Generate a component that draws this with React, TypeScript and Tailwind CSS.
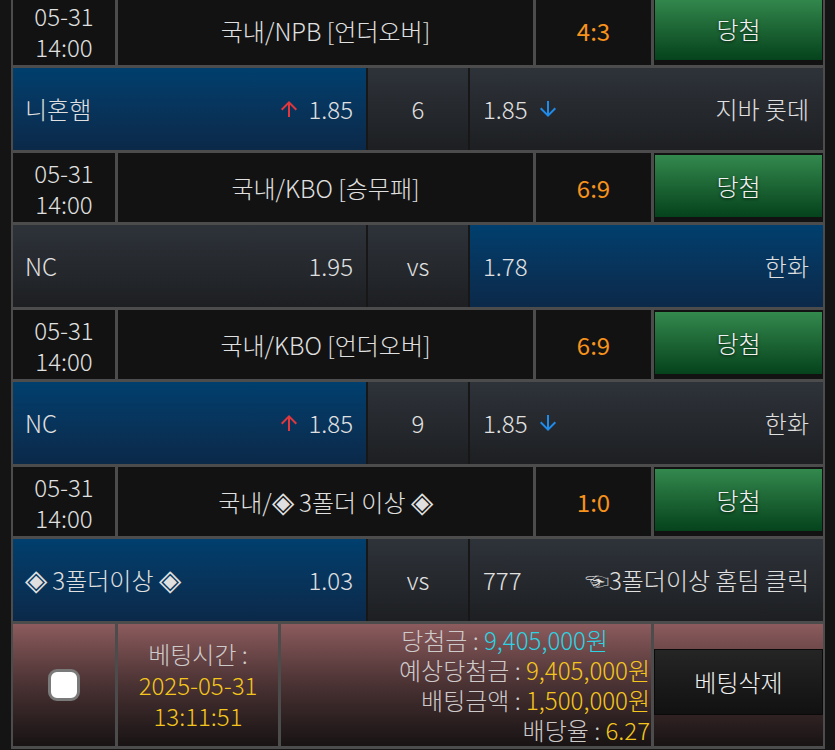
import type { ReactNode } from "react";

type Game = {
  league: ReactNode;
  score: string;
  home: ReactNode;
  homeOdds: string;
  mid: string;
  awayOdds: string;
  away: string;
  pick: "home" | "away";
  arrows?: boolean;
};

// the diamond glyph is drawn a bit larger than the text around it
function Dia() {
  return <span className="inline-block text-[29px] leading-none">◈</span>;
}

const games: Game[] = [
  {
    league: "국내/NPB [언더오버]",
    score: "4:3",
    home: "니혼햄",
    homeOdds: "1.85",
    mid: "6",
    awayOdds: "1.85",
    away: "지바 롯데",
    pick: "home",
    arrows: true,
  },
  {
    league: "국내/KBO [승무패]",
    score: "6:9",
    home: "NC",
    homeOdds: "1.95",
    mid: "vs",
    awayOdds: "1.78",
    away: "한화",
    pick: "away",
  },
  {
    league: "국내/KBO [언더오버]",
    score: "6:9",
    home: "NC",
    homeOdds: "1.85",
    mid: "9",
    awayOdds: "1.85",
    away: "한화",
    pick: "home",
    arrows: true,
  },
  {
    league: (
      <>
        국내/<Dia /> 3폴더 이상 <Dia />
      </>
    ),
    score: "1:0",
    home: (
      <>
        <Dia /> 3폴더이상 <Dia />
      </>
    ),
    homeOdds: "1.03",
    mid: "vs",
    awayOdds: "777",
    away: "☜3폴더이상 홈팀 클릭",
    pick: "home",
  },
];

// material style arrows
function UpArrow() {
  return (
    <svg viewBox="0 0 24 24" className="w-6 h-6 fill-[#e2373c]">
      <path d="M4 12l1.41 1.41L11 7.83V20h2V7.83l5.58 5.59L20 12l-8-8-8 8z" />
    </svg>
  );
}

function DownArrow() {
  return (
    <svg viewBox="0 0 24 24" className="w-6 h-6 fill-[#1f8bea]">
      <path d="M20 12l-1.41-1.41L13 16.17V4h-2v12.17l-5.58-5.59L4 12l8 8 8-8z" />
    </svg>
  );
}

const selected = "bg-linear-to-b from-[#003f6e] to-[#0b2949]";
const plain = "bg-linear-to-b from-[#2e333a] to-[#1d1f22]";

function InfoRow({ game }: { game: Game }) {
  return (
    <div className="flex h-[69px] gap-[3px]">
      <div className="w-[102px] flex flex-col items-center justify-center bg-[#121212] leading-[31px]">
        <span>05-31</span>
        <span>14:00</span>
      </div>
      <div className="w-[415px] flex items-center justify-center bg-[#121212]">
        <span>{game.league}</span>
      </div>
      <div className="w-[115px] flex items-center justify-center bg-[#121212] font-normal text-[#f7921c]">
        {game.score}
      </div>
      <div className="flex-1 bg-[#121212] pt-[2px] pb-[5px] pl-[1px] pr-[1px]">
        <div className="h-full flex items-center justify-center bg-linear-to-b from-[#33894e] to-[#05431c] text-[#f2f2f2] [text-shadow:0_1px_3px_rgba(0,0,0,0.7)]">
          당첨
        </div>
      </div>
    </div>
  );
}

function OddsRow({ game }: { game: Game }) {
  return (
    <div className="flex h-[82px] gap-[2px] bg-[#171717]">
      <div
        className={`w-[353px] flex items-center justify-between pl-3 pr-[13px] ${
          game.pick === "home" ? selected : plain
        }`}
      >
        <span>{game.home}</span>
        <span className="flex items-center gap-[7px]">
          {game.arrows && <UpArrow />}
          {game.homeOdds}
        </span>
      </div>
      <div className={`w-[100px] flex items-center justify-center ${plain}`}>
        {game.mid}
      </div>
      <div
        className={`flex-1 flex items-center justify-between pl-[13px] pr-[14px] ${
          game.pick === "away" ? selected : plain
        }`}
      >
        <span className="flex items-center gap-2">
          {game.awayOdds}
          {game.arrows && <DownArrow />}
        </span>
        <span>{game.away}</span>
      </div>
    </div>
  );
}

const betBg = "bg-linear-to-b from-[#8c5b5d] via-[#4a3233] to-[#181314]";

function BetLine({ label, value, color, extra }: { label: string; value: string; color: string; extra?: string }) {
  return (
    <div className={`h-[30px] flex items-center text-[#cfcaca] ${extra ?? ""}`}>
      {label}&nbsp;:&nbsp;<span className={color}>{value}</span>
    </div>
  );
}

function BetRow() {
  return (
    <div className="flex h-[122px] gap-[3px]">
      <div className={`w-[102px] flex items-center justify-center ${betBg}`}>
        <div className="w-8 h-8 rounded-[9px] bg-white border-[3px] border-[#7a7a7a]" />
      </div>
      <div className={`w-[160px] flex flex-col items-center justify-center ${betBg}`}>
        <div className="h-[31px] flex items-center text-[#cfcaca]">베팅시간 :</div>
        <div className="h-[31px] flex items-center text-[#f4c61d]">2025-05-31</div>
        <div className="h-[31px] flex items-center text-[#f4c61d]">13:11:51</div>
      </div>
      <div className={`w-[370px] flex flex-col items-end justify-center pr-[1px] ${betBg}`}>
        <BetLine label="당첨금" value="9,405,000원" color="text-[#2bd3e3]" extra="mr-[42px]" />
        <BetLine label="예상당첨금" value="9,405,000원" color="text-[#f4c61d]" />
        <BetLine label="배팅금액" value="1,500,000원" color="text-[#f4c61d]" />
        <BetLine label="배당율" value="6.27" color="text-[#f4c61d]" />
      </div>
      <div className={`flex-1 pt-[25px] ${betBg}`}>
        <div className="h-[66px] flex items-center justify-center bg-linear-to-b from-[#252525] to-[#111111] border border-[#0a0a0a] text-[#f0f0f0]">
          베팅삭제
        </div>
      </div>
    </div>
  );
}

export default function App() {
  return (
    <div className="h-[750px] overflow-hidden bg-[#141414] font-['Noto_Sans_CJK_KR','Noto_Sans',sans-serif] font-light text-[24px] text-[#e0e0e0]">
      <div className="ml-[11px] w-[814px] -mt-[7px] bg-[#4c4c4c] pt-[3px] pb-[3px] px-[2px] flex flex-col gap-[3px]">
        {games.map((g, i) => (
          <div key={i} className="flex flex-col gap-[3px]">
            <InfoRow game={g} />
            <OddsRow game={g} />
          </div>
        ))}
        <BetRow />
      </div>
    </div>
  );
}
